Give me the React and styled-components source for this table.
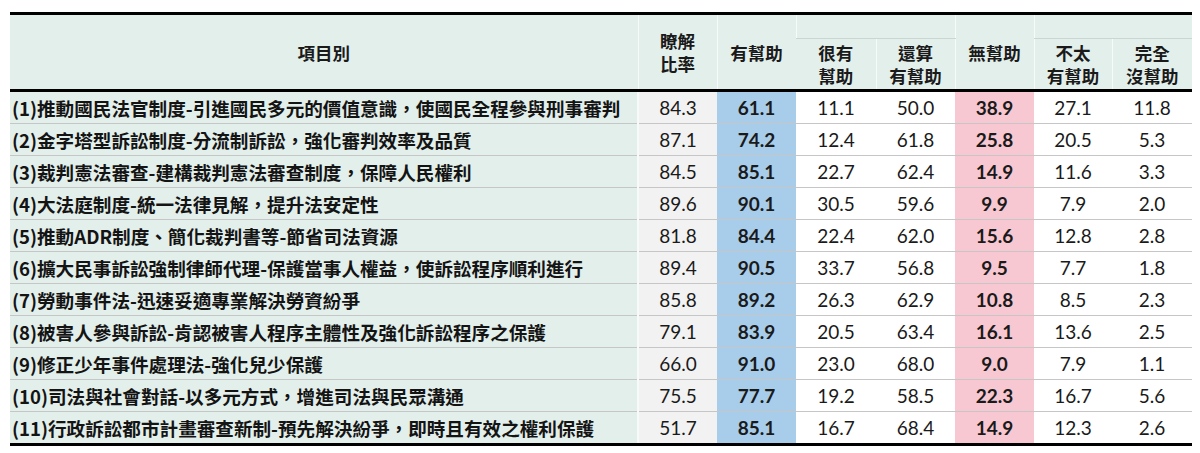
import React from 'react';
import styled, { createGlobalStyle } from 'styled-components';

const GlobalStyle = createGlobalStyle`
  body {
    margin: 0;
    background: #ffffff;
    font-family: "Noto Sans CJK TC", "Noto Sans", sans-serif;
  }
`;

const rows = [
  ['(1)推動國民法官制度-引進國民多元的價值意識，使國民全程參與刑事審判', '84.3', '61.1', '11.1', '50.0', '38.9', '27.1', '11.8'],
  ['(2)金字塔型訴訟制度-分流制訴訟，強化審判效率及品質', '87.1', '74.2', '12.4', '61.8', '25.8', '20.5', '5.3'],
  ['(3)裁判憲法審查-建構裁判憲法審查制度，保障人民權利', '84.5', '85.1', '22.7', '62.4', '14.9', '11.6', '3.3'],
  ['(4)大法庭制度-統一法律見解，提升法安定性', '89.6', '90.1', '30.5', '59.6', '9.9', '7.9', '2.0'],
  ['(5)推動ADR制度、簡化裁判書等-節省司法資源', '81.8', '84.4', '22.4', '62.0', '15.6', '12.8', '2.8'],
  ['(6)擴大民事訴訟強制律師代理-保護當事人權益，使訴訟程序順利進行', '89.4', '90.5', '33.7', '56.8', '9.5', '7.7', '1.8'],
  ['(7)勞動事件法-迅速妥適專業解決勞資紛爭', '85.8', '89.2', '26.3', '62.9', '10.8', '8.5', '2.3'],
  ['(8)被害人參與訴訟-肯認被害人程序主體性及強化訴訟程序之保護', '79.1', '83.9', '20.5', '63.4', '16.1', '13.6', '2.5'],
  ['(9)修正少年事件處理法-強化兒少保護', '66.0', '91.0', '23.0', '68.0', '9.0', '7.9', '1.1'],
  ['(10)司法與社會對話-以多元方式，增進司法與民眾溝通', '75.5', '77.7', '19.2', '58.5', '22.3', '16.7', '5.6'],
  ['(11)行政訴訟都市計畫審查新制-預先解決紛爭，即時且有效之權利保護', '51.7', '85.1', '16.7', '68.4', '14.9', '12.3', '2.6'],
];

const tones = ['grey', 'blue', 'white', 'white', 'pink', 'white', 'white'];

const toneColor = {
  grey: '#f2f2f2',
  blue: '#a8cdeb',
  pink: '#f8c8d2',
  white: '#ffffff',
};

const Page = styled.div`
  padding: 12px 0 0 10px;
`;

const Table = styled.table`
  width: 1182px;
  table-layout: fixed;
  border-collapse: collapse;
  border-top: 3px solid #000;
  border-bottom: 3px solid #000;
`;

const Head = styled.thead`
  border-bottom: 3px solid #000;
`;

const HeadCell = styled.th`
  background: #e3efeb;
  color: #1a1a1a;
  font-weight: 700;
  font-size: 17.5px;
  line-height: 23px;
  text-align: center;
  vertical-align: middle;
  padding: 0;
  height: ${(p) => p.$h || 23}px;
  border-left: 1px solid #f6fbf9;
  border-bottom: ${(p) => (p.$split ? '1px solid #c9d6d2' : 'none')};

  &:first-child {
    border-left: none;
  }
`;

const Row = styled.tr`
  border-top: 1px solid #c6c6c6;

  &:first-child {
    border-top: none;
  }
`;

const LabelCell = styled.td`
  background: #e3efeb;
  height: 31px;
  padding: 0 0 0 2px;
  font-size: 18.6px;
  font-weight: 700;
  color: #141414;
  white-space: nowrap;
  overflow: hidden;
  border-right: 2px solid #f6fbf9;
`;

const NumCell = styled.td`
  background: ${(p) => toneColor[p.$tone]};
  height: 31px;
  padding: 0;
  text-align: center;
  font-family: Lato, "Liberation Sans", sans-serif;
  font-size: 19px;
  font-weight: ${(p) => (p.$bold ? 700 : 400)};
  color: #1a1a1a;
`;

export default function App() {
  return (
    <Page>
      <GlobalStyle />
      <Table>
        <colgroup>
          <col style={{ width: 628 }} />
          <col style={{ width: 79 }} />
          <col style={{ width: 79 }} />
          <col style={{ width: 80 }} />
          <col style={{ width: 79 }} />
          <col style={{ width: 79 }} />
          <col style={{ width: 78 }} />
          <col style={{ width: 80 }} />
        </colgroup>
        <Head>
          <tr>
            <HeadCell rowSpan={2}>項目別</HeadCell>
            <HeadCell rowSpan={2}>瞭解<br />比率</HeadCell>
            <HeadCell rowSpan={2}>有幫助</HeadCell>
            <HeadCell colSpan={2} $split />
            <HeadCell rowSpan={2}>無幫助</HeadCell>
            <HeadCell colSpan={2} $split />
          </tr>
          <tr>
            <HeadCell $h={50}>很有<br />幫助</HeadCell>
            <HeadCell $h={50}>還算<br />有幫助</HeadCell>
            <HeadCell $h={50}>不太<br />有幫助</HeadCell>
            <HeadCell $h={50}>完全<br />沒幫助</HeadCell>
          </tr>
        </Head>
        <tbody>
          {rows.map(([label, ...nums]) => (
            <Row key={label}>
              <LabelCell>{label}</LabelCell>
              {nums.map((n, i) => (
                <NumCell key={i} $tone={tones[i]} $bold={tones[i] === 'blue' || tones[i] === 'pink'}>
                  {n}
                </NumCell>
              ))}
            </Row>
          ))}
        </tbody>
      </Table>
    </Page>
  );
}
